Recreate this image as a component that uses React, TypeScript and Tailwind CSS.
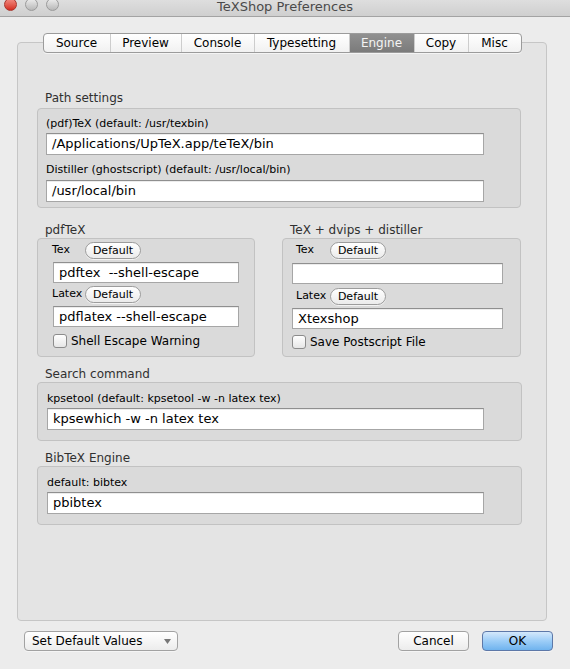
import type { ReactNode } from "react";

const TABS = [
  { name: "Source", w: "w-[66px]" },
  { name: "Preview", w: "w-[71px]" },
  { name: "Console", w: "w-[73px]" },
  { name: "Typesetting", w: "w-[95px]" },
  { name: "Engine", w: "w-[65px]" },
  { name: "Copy", w: "w-[54px]" },
  { name: "Misc", w: "w-[53px]" },
];

function TextField({ value, className }: { value: string; className: string }) {
  return (
    <div
      className={`flex items-center bg-white border border-[#a6a6a6] border-t-[#8f8f8f] pl-[5px] text-[13px] text-black whitespace-pre overflow-hidden shadow-[inset_0_1px_0_#ececec] ${className}`}
    >
      {value}
    </div>
  );
}

function PillButton() {
  return (
    <div className="w-[56px] h-[17px] flex items-center justify-center rounded-full border border-[#9c9c9c] bg-gradient-to-b from-white to-[#ebebeb] text-[11px] text-black leading-none shadow-[0_1px_0_#f2f2f2]">
      Default
    </div>
  );
}

function Checkbox({ label }: { label: string }) {
  return (
    <div className="flex items-center h-[14px] gap-[4px]">
      <div className="w-[14px] h-[14px] rounded-[3px] border border-[#8c8c8c] bg-gradient-to-b from-white to-[#e6e6e6]" />
      <span className="text-[12px] text-black leading-none">{label}</span>
    </div>
  );
}

function GroupLabel({ children, className }: { children: ReactNode; className: string }) {
  return (
    <div className={`h-[16px] leading-[16px] text-[12px] text-[#303030] pl-[8px] ${className}`}>
      {children}
    </div>
  );
}

function Group({ children, className }: { children: ReactNode; className: string }) {
  return (
    <div className={`rounded-[4px] border border-[#c2c2c2] bg-[#dadada] ${className}`}>
      {children}
    </div>
  );
}

function SmallLabel({ children }: { children: ReactNode }) {
  return <div className="h-[14px] leading-[14px] text-[11px] text-black whitespace-nowrap">{children}</div>;
}

export default function App() {
  return (
    <div className="w-[570px] h-[669px] bg-[#ececec] flex flex-col font-['DejaVu_Sans',sans-serif] overflow-hidden">
      {/* title bar, top cut off */}
      <div className="h-[17px] shrink-0 relative flex items-start bg-gradient-to-b from-[#dedede] to-[#cfcfcf] border-b border-[#a3a3a3]">
        <div className="flex gap-[8px] pl-[4px] -mt-[2px]">
          <div className="w-[13px] h-[13px] rounded-full border border-[#a8362d] bg-gradient-to-b from-[#f28b82] to-[#d4271d]" />
          <div className="w-[13px] h-[13px] rounded-full border border-[#9a9a9a] bg-gradient-to-b from-[#ededed] to-[#b8b8b8]" />
          <div className="w-[13px] h-[13px] rounded-full border border-[#9a9a9a] bg-gradient-to-b from-[#ededed] to-[#b8b8b8]" />
        </div>
        <div className="absolute inset-x-0 top-0 text-center text-[13px] leading-[14px] text-[#4a4a4a]">
          TeXShop Preferences
        </div>
      </div>

      {/* tab strip, centred over the panel */}
      <div className="mt-[16px] ml-[17px] w-[530px] flex justify-center relative z-10">
        <div className="flex h-[20px] rounded-[4px] border border-[#9b9b9b] bg-gradient-to-b from-white to-[#f1f1f1] overflow-hidden shadow-[0_1px_0_#f4f4f4]">
          {TABS.map((t, i) => {
            const sel = t.name === "Engine";
            return (
              <div
                key={t.name}
                className={`${t.w} flex items-center justify-center text-[12px] leading-none ${
                  i > 0 ? "border-l border-[#cdcdcd]" : ""
                } ${sel ? "bg-gradient-to-b from-[#909090] to-[#7b7b7b] text-[#f4f4f4] border-[#7a7a7a]" : "text-black"}`}
              >
                {t.name}
              </div>
            );
          })}
        </div>
      </div>

      {/* tab panel */}
      <div className="ml-[17px] w-[530px] h-[579px] -mt-[11px] shrink-0 rounded-[4px] border border-[#c6c6c6] bg-[#e4e4e4] pl-[19px] pt-[47px]">
        {/* path settings */}
        <GroupLabel className="mb-[2px]">Path settings</GroupLabel>
        <Group className="w-[484px] pl-[8px] pt-[8px] pb-[5px]">
          <SmallLabel>(pdf)TeX (default: /usr/texbin)</SmallLabel>
          <TextField value="/Applications/UpTeX.app/teTeX/bin" className="mt-[2px] w-[438px] h-[22px]" />
          <div className="mt-[8px]">
            <SmallLabel>Distiller (ghostscript) (default: /usr/local/bin)</SmallLabel>
          </div>
          <TextField value="/usr/local/bin" className="mt-[3px] w-[438px] h-[22px]" />
        </Group>

        {/* engines */}
        <div className="flex gap-[27px] mt-[14px]">
          <div className="flex flex-col">
            <GroupLabel className="">pdfTeX</GroupLabel>
            <Group className="w-[218px] h-[119px] pt-[3px]">
              <div className="flex items-center pl-[14px] h-[17px]">
                <span className="w-[33px] text-[11px] text-black">Tex</span>
                <PillButton />
              </div>
              <TextField value="pdftex  --shell-escape" className="mt-[3px] ml-[15px] w-[186px] h-[21px]" />
              <div className="flex items-center pl-[14px] h-[17px] mt-[3px]">
                <span className="w-[33px] text-[11px] text-black">Latex</span>
                <PillButton />
              </div>
              <TextField value="pdflatex --shell-escape" className="mt-[3px] ml-[15px] w-[186px] h-[21px]" />
              <div className="mt-[7px] ml-[15px]">
                <Checkbox label="Shell Escape Warning" />
              </div>
            </Group>
          </div>
          <div className="flex flex-col">
            <GroupLabel className="">TeX + dvips + distiller</GroupLabel>
            <Group className="w-[239px] h-[119px] pt-[3px]">
              <div className="flex items-center pl-[13px] h-[17px]">
                <span className="w-[34px] text-[11px] text-black">Tex</span>
                <PillButton />
              </div>
              <TextField value="" className="mt-[4px] ml-[9px] w-[211px] h-[21px]" />
              <div className="flex items-center pl-[13px] h-[17px] mt-[4px]">
                <span className="w-[34px] text-[11px] text-black">Latex</span>
                <PillButton />
              </div>
              <TextField value="Xtexshop" className="mt-[3px] ml-[9px] w-[211px] h-[21px]" />
              <div className="mt-[6px] ml-[9px]">
                <Checkbox label="Save Postscript File" />
              </div>
            </Group>
          </div>
        </div>

        {/* search command */}
        <GroupLabel className="mt-[9px]">Search command</GroupLabel>
        <Group className="w-[485px] pl-[9px] pt-[9px] pb-[10px]">
          <SmallLabel>kpsetool (default: kpsetool -w -n latex tex)</SmallLabel>
          <TextField value="kpsewhich -w -n latex tex" className="mt-[2px] w-[437px] h-[22px]" />
        </Group>

        {/* bibtex */}
        <GroupLabel className="mt-[9px]">BibTeX Engine</GroupLabel>
        <Group className="w-[485px] pl-[9px] pt-[9px] pb-[10px]">
          <SmallLabel>default: bibtex</SmallLabel>
          <TextField value="pbibtex" className="mt-[2px] w-[437px] h-[22px]" />
        </Group>
      </div>

      {/* bottom buttons */}
      <div className="mt-[10px] flex items-center pl-[24px] pr-[17px]">
        <div className="w-[154px] h-[20px] flex items-center justify-between pl-[7px] pr-[6px] rounded-[4px] border border-[#a2a2a2] bg-gradient-to-b from-white to-[#ececec] text-[12px] text-black shadow-[0_1px_0_#f5f5f5]">
          <span>Set Default Values</span>
          <svg width="7" height="5" viewBox="0 0 7 5">
            <path d="M0 0 L7 0 L3.5 5 Z" fill="#777" />
          </svg>
        </div>
        <div className="flex-1" />
        <div className="w-[71px] h-[20px] flex items-center justify-center rounded-[4px] border border-[#a2a2a2] bg-gradient-to-b from-white to-[#ececec] text-[12px] text-black shadow-[0_1px_0_#f5f5f5]">
          Cancel
        </div>
        <div className="ml-[13px] w-[71px] h-[20px] flex items-center justify-center rounded-[4px] border border-[#5d78a8] bg-gradient-to-b from-[#d4e8fb] via-[#9ccdf7] to-[#6fb3ee] text-[12px] text-black shadow-[0_1px_0_#f5f5f5]">
          OK
        </div>
      </div>
    </div>
  );
}
